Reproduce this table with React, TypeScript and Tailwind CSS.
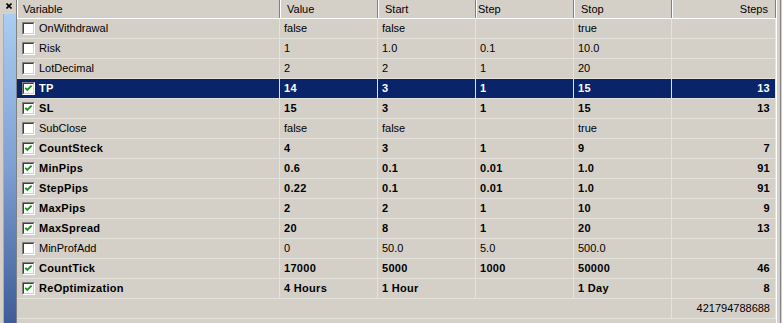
import React from 'react';

type Row = {
  name: string;
  value: string;
  start: string;
  step: string;
  stop: string;
  steps: string;
  checked: boolean;
  selected?: boolean;
};

const rows: Row[] = [
  { name: 'OnWithdrawal', value: 'false', start: 'false', step: '', stop: 'true', steps: '', checked: false },
  { name: 'Risk', value: '1', start: '1.0', step: '0.1', stop: '10.0', steps: '', checked: false },
  { name: 'LotDecimal', value: '2', start: '2', step: '1', stop: '20', steps: '', checked: false },
  { name: 'TP', value: '14', start: '3', step: '1', stop: '15', steps: '13', checked: true, selected: true },
  { name: 'SL', value: '15', start: '3', step: '1', stop: '15', steps: '13', checked: true },
  { name: 'SubClose', value: 'false', start: 'false', step: '', stop: 'true', steps: '', checked: false },
  { name: 'CountSteck', value: '4', start: '3', step: '1', stop: '9', steps: '7', checked: true },
  { name: 'MinPips', value: '0.6', start: '0.1', step: '0.01', stop: '1.0', steps: '91', checked: true },
  { name: 'StepPips', value: '0.22', start: '0.1', step: '0.01', stop: '1.0', steps: '91', checked: true },
  { name: 'MaxPips', value: '2', start: '2', step: '1', stop: '10', steps: '9', checked: true },
  { name: 'MaxSpread', value: '20', start: '8', step: '1', stop: '20', steps: '13', checked: true },
  { name: 'MinProfAdd', value: '0', start: '50.0', step: '5.0', stop: '500.0', steps: '', checked: false },
  { name: 'CountTick', value: '17000', start: '5000', step: '1000', stop: '50000', steps: '46', checked: true },
  { name: 'ReOptimization', value: '4 Hours', start: '1 Hour', step: '', stop: '1 Day', steps: '8', checked: true },
];

const Checkbox: React.FC<{ checked: boolean }> = ({ checked }) => (
  <span className="w-[13px] h-[13px] shrink-0 border border-t-[#808080] border-l-[#808080] border-b-white border-r-white flex">
    <span className="flex-1 border border-t-[#404040] border-l-[#404040] border-b-[#d4d0c8] border-r-[#d4d0c8] bg-white flex items-center justify-center">
      {checked && (
        <svg width="9" height="9" viewBox="0 0 9 9">
          <path d="M1.3 3.8 L3.3 5.9 L7.6 1.6" fill="none" stroke="#0f9a0f" strokeWidth="1.9" />
        </svg>
      )}
    </span>
  </span>
);

const App: React.FC = () => {
  return (
    <div className="w-[782px] h-[323px] flex bg-[#d4d0c8] overflow-hidden font-['Liberation_Sans',Arial,sans-serif] text-[11px] text-black">
      {/* side panel strip */}
      <div className="w-[16px] flex flex-col shrink-0">
        <div className="h-[14px] flex items-start pl-[6px] pt-[3px]">
          <svg width="6" height="6" viewBox="0 0 6 6">
            <path d="M0.5 0.5 L5.5 5.5 M5.5 0.5 L0.5 5.5" stroke="#000" strokeWidth="1.6" />
          </svg>
        </div>
        <div className="flex-1 ml-[3px] bg-gradient-to-b from-[#aacdf4] via-[#7d9fd2] to-[#3e5d98] border-l border-[#8cb0e0]" />
      </div>
      <div className="w-px bg-[#808080] shrink-0" />

      {/* grid */}
      <div className="flex-1 flex flex-col">
        <div className="flex h-[19px] border-b border-white">
          <div className="w-[263px] border-l border-white border-r border-r-[#808080] pl-[5px] flex items-center">Variable</div>
          <div className="w-[98px] border-l border-white border-r border-r-[#808080] pl-[6px] flex items-center">Value</div>
          <div className="w-[98px] border-l border-white border-r border-r-[#808080] pl-[6px] flex items-center">Start</div>
          <div className="w-[98px] border-l border-white border-r border-r-[#808080] pl-[1px] flex items-center">Step</div>
          <div className="w-[98px] border-l border-white border-r border-r-[#808080] pl-[6px] flex items-center">Stop</div>
          <div className="w-[104px] border-l border-white border-r border-r-[#808080] pr-[7px] flex items-center justify-end">Steps</div>
        </div>

        {rows.map((r) => {
          const tone = r.selected ? 'bg-[#0a246a] text-white' : '';
          const weight = r.checked ? 'font-bold tracking-[0.3px]' : '';
          return (
            <div key={r.name} className={`flex h-[20px] border-b border-[#e4e2dd] ${tone} ${weight}`}>
              <div className="w-[263px] border-r border-[#e4e2dd] pl-[5px] flex items-center gap-[4px]">
                <Checkbox checked={r.checked} />
                <span>{r.name}</span>
              </div>
              <div className="w-[98px] border-r border-[#e4e2dd] pl-[4px] flex items-center">{r.value}</div>
              <div className="w-[98px] border-r border-[#e4e2dd] pl-[4px] flex items-center">{r.start}</div>
              <div className="w-[98px] border-r border-[#e4e2dd] pl-[4px] flex items-center">{r.step}</div>
              <div className="w-[98px] border-r border-[#e4e2dd] pl-[4px] flex items-center">{r.stop}</div>
              <div className="w-[104px] border-r border-[#e4e2dd] pr-[5px] flex items-center justify-end">{r.steps}</div>
            </div>
          );
        })}

        <div className="flex h-[20px] border-b border-[#e4e2dd]">
          <div className="w-[655px] border-r border-[#e4e2dd]" />
          <div className="w-[104px] border-r border-[#e4e2dd] pr-[5px] flex items-center justify-end">421794788688</div>
        </div>
      </div>

      {/* right frame */}
      <div className="w-px bg-white shrink-0" />
      <div className="w-[3px] shrink-0" />
      <div className="w-px bg-[#808080] shrink-0" />
      <div className="w-px shrink-0" />
    </div>
  );
};

export default App;
